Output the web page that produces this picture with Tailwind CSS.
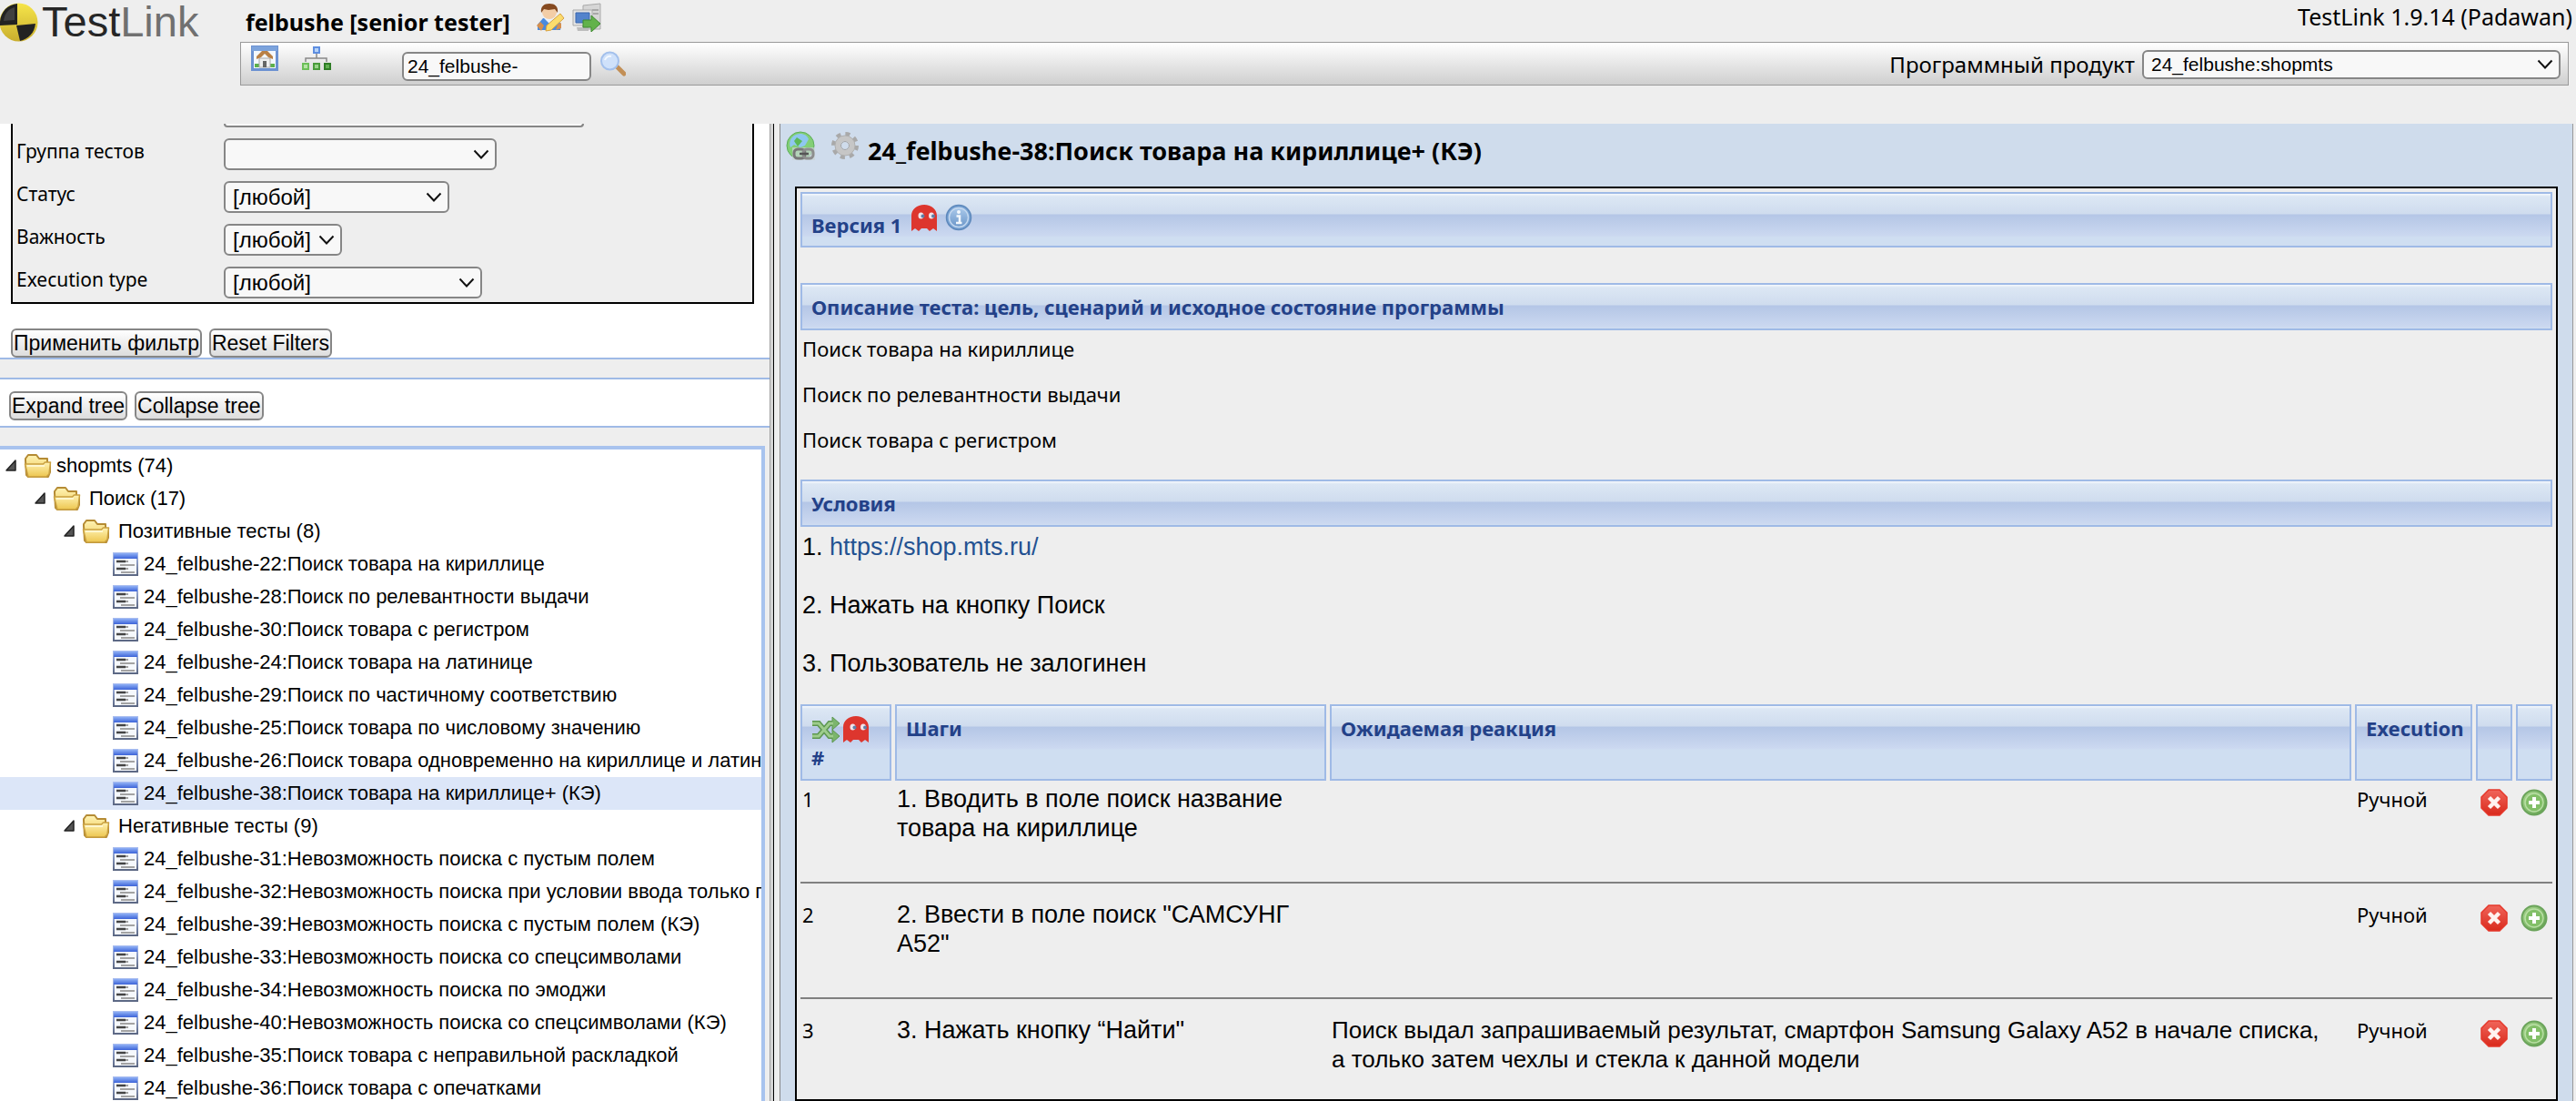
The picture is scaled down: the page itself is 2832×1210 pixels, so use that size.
<!DOCTYPE html>
<html lang="ru">
<head>
<meta charset="utf-8">
<title>TestLink 1.9.14 (Padawan)</title>
<script src="https://cdn.jsdelivr.net/npm/@tailwindcss/browser@4"></script>
</head>
<body class="flex h-screen flex-col overflow-hidden bg-[#eeeeee] font-['Noto_Sans',sans-serif] text-[22px] leading-8 text-black">

<svg class="absolute size-0" aria-hidden="true">
  <defs>
    <linearGradient id="gYellow" x1="0" y1="0" x2="0" y2="1"><stop offset="0" stop-color="#f6e54a"/><stop offset="1" stop-color="#c9ae2e"/></linearGradient>
    <linearGradient id="gFolder" x1="0" y1="0" x2="0" y2="1"><stop offset="0" stop-color="#fff3b4"/><stop offset="1" stop-color="#edc64f"/></linearGradient>
    <linearGradient id="gDocTop" x1="0" y1="0" x2="0" y2="1"><stop offset="0" stop-color="#8fb0f5"/><stop offset="1" stop-color="#3c63d8"/></linearGradient>
    <linearGradient id="gDocEdge" x1="0" y1="0" x2="0" y2="1"><stop offset="0" stop-color="#a9bdf0"/><stop offset="1" stop-color="#5c6884"/></linearGradient>
    <linearGradient id="gRed" x1="0" y1="0" x2="0" y2="1"><stop offset="0" stop-color="#f0655a"/><stop offset="1" stop-color="#d92a1c"/></linearGradient>
    <linearGradient id="gGreen" x1="0" y1="0" x2="1" y2="1"><stop offset="0" stop-color="#aad890"/><stop offset="1" stop-color="#5f9f4c"/></linearGradient>
    <linearGradient id="gBlue" x1="0" y1="0" x2="0" y2="1"><stop offset="0" stop-color="#a9c8ea"/><stop offset="1" stop-color="#6c97c9"/></linearGradient>
  </defs>
  <symbol id="chevron" viewBox="0 0 18 12"><path d="M1.500 1.500 9 9.500l7.500-8" fill="none" stroke="#111" stroke-width="2"/></symbol>
  <symbol id="arrow" viewBox="0 0 14 14"><path d="M12 1v11H2z" fill="#555" stroke="#222" stroke-width="1.500" stroke-linejoin="round"/></symbol>
  <symbol id="folder" viewBox="0 0 32 28">
    <path d="M2 8V6l3-4h9l3 4h9v5h3v10l-2 5H5l-2-2z" fill="url(#gFolder)" stroke="#b58b34" stroke-width="2" stroke-linejoin="round"/>
    <path d="M1.500 12h20l2-2h6L28 23l-3 3H5z" fill="url(#gFolder)" stroke="#c9a040" stroke-width="1.500" stroke-linejoin="round"/>
    <path d="M4 14h19" stroke="#fffbe0" stroke-width="1.500"/>
  </symbol>
  <symbol id="doc" viewBox="0 0 28 26">
    <rect x="1" y="1" width="26" height="24" fill="#f5f8fc" stroke="url(#gDocEdge)" stroke-width="2"/>
    <rect x="1" y="1" width="26" height="6" fill="url(#gDocTop)"/>
    <path d="M4 10h10M4 18h10" stroke="#444" stroke-width="2.500"/>
    <path d="M8 14h16M14 10h3M14 18h3M9 22h15" stroke="#a3a3a3" stroke-width="2"/>
  </symbol>
  <symbol id="ghost" viewBox="0 0 30 32">
    <path d="M1 30V13C1 6 7 1 15 1s14 5 14 12v17l-4-3-4 3-3-3h-6l-3 3-4-3z" fill="#dd362e"/>
    <ellipse cx="11.500" cy="13" rx="3" ry="3.500" fill="#f1e4ea"/><ellipse cx="23" cy="13" rx="3" ry="3.500" fill="#f1e4ea"/>
    <circle cx="13.500" cy="13.500" r="2" fill="#5d7fa8"/><circle cx="25" cy="13.500" r="2" fill="#5d7fa8"/>
  </symbol>
  <symbol id="info" viewBox="0 0 30 30">
    <circle cx="15" cy="15" r="13.500" fill="#79a3d3" stroke="#5d88bb" stroke-width="1.500"/>
    <circle cx="15" cy="15" r="10.500" fill="url(#gBlue)" stroke="#c4d8ef" stroke-width="1.500"/>
    <circle cx="15" cy="9" r="2" fill="#f2f7fc"/><path d="M12.500 13.500H16V20M12 21h6.500" fill="none" stroke="#f2f7fc" stroke-width="2.500"/>
  </symbol>
  <symbol id="del" viewBox="0 0 30 30">
    <path d="M9 1h12l8 8v12l-8 8H9l-8-8V9z" fill="url(#gRed)" stroke="#e5382b" stroke-width="1.500"/>
    <path d="m9.500 9.500 11 11m0-11-11 11" stroke="#fff3f0" stroke-width="4.500"/>
  </symbol>
  <symbol id="add" viewBox="0 0 30 30">
    <circle cx="15" cy="15" r="13.500" fill="url(#gGreen)" stroke="#6ba45b" stroke-width="2"/>
    <circle cx="15" cy="15" r="10" fill="#82bf68" stroke="#b9dfa5" stroke-width="1.500"/>
    <path d="M15 9v12M9 15h12" stroke="#fff" stroke-width="4"/>
  </symbol>
</svg>

<header class="flex h-34 shrink-0">
  <a href="#" class="flex w-66 shrink-0 items-start font-['Liberation_Sans',sans-serif] text-[47px] leading-12" aria-label="TestLink">
    <svg class="mr-1 h-12 w-[42px]" viewBox="0 0 42 48">
      <circle cx="20.500" cy="24.500" r="21" fill="url(#gYellow)"/>
      <path d="M19 4v23L0 28C-1 15 7 5 19 4zM18 28l21-2c-1 10-8 17-17 19z" fill="#222"/>
      <path d="M16 8v14L4 23C5 15 9 10 16 8z" fill="#777" opacity=".35"/>
    </svg>
    <span class="text-[#262626]">Test</span><span class="text-[#707070]">Link</span>
  </a>
  <div class="flex min-w-0 flex-1 flex-col pr-1">
    <div class="flex h-[46px] items-center">
      <span class="pt-0.5 pl-1.5 text-[25px] font-bold">felbushe [senior tester]</span>
      <a href="#" class="-mt-2 ml-7" aria-label="Мои настройки">
        <svg class="size-8" viewBox="0 0 32 32">
          <path d="M2 30v-6l6-7h15l5 7-1 6z" fill="#4a8ade"/><path d="m1 25 5 6 3-6-4-4zM22 30l6-2v-6l-4 2z" fill="#d58f4e"/>
          <path d="m9 17 6 6 6-6z" fill="#e8f1fb"/><circle cx="15" cy="10" r="8" fill="#f3cda6"/>
          <path d="M6 11C5 4 9 1 15 1s10 3 9 10l-3-4-7 1-5-1z" fill="#85491f"/>
          <path d="m12 25 15-13 4 5-14 13-6 1z" fill="#fbdc6d" stroke="#d9a23e"/>
        </svg>
      </a>
      <a href="#" class="-mt-2 ml-2" aria-label="Выход">
        <svg class="size-8" viewBox="0 0 32 32">
          <path d="M12 3 31 1v28H12z" fill="#d6d6d6" stroke="#a9a9a9"/><path d="M22 8h7M23 12h6" stroke="#999" stroke-width="1.500"/>
          <path d="M1 8h21v17H1z" fill="#e4e4e4" stroke="#aaa"/><path d="M4 11h15v11H4z" fill="#5383cc" stroke="#3a66ae"/>
          <path d="M5 27h13v4H6z" fill="#bcbcbc"/><path d="M12 19h9v-5l10 9-10 9v-5h-9z" fill="#62b24a" stroke="#3f8a31"/>
        </svg>
      </a>
      <span class="ml-auto self-start text-[25px] leading-9">TestLink 1.9.14 (Padawan)</span>
    </div>
    <div class="mr-1 flex h-12 items-center border border-[#999999] bg-linear-to-b from-white to-[#cfcfcf] pr-2 pl-[11px]">
      <a href="#" class="-mt-3" aria-label="Рабочий стол">
        <svg class="h-7 w-[30px]" viewBox="0 0 30 28">
          <rect x="1.500" y="1.500" width="27" height="25" fill="#f4f8fd" stroke="#6c92d2" stroke-width="3"/><path d="M1 1h28v5H1z" fill="#7ca3dc"/>
          <path d="M4 20h22v4H4z" fill="#5db04c"/><path d="M9 14h12v10H9z" fill="#eee" stroke="#aaa"/><path d="M13 17h4v7h-4z" fill="#666"/>
          <path d="M6 15v-3l6-6h6l6 6v3l-5-2-4-4-4 4z" fill="#b98046"/>
        </svg>
      </a>
      <a href="#" class="-mt-3 ml-[26px]" aria-label="Проект">
        <svg class="h-7 w-8" viewBox="0 0 32 28">
          <path d="M4 18v-4h23v4M16 9v5" fill="none" stroke="#888" stroke-width="1.500"/>
          <path d="M12 1h8v8h-8z" fill="#5e8ee0"/><path d="M14 3h4v4h-4z" fill="#b5d2f8"/>
          <path d="M0 19h8v8H0z" fill="#6cbf58"/><path d="M2 21h4v4H2z" fill="#b5e3a5"/>
          <path d="M12 19h8v8h-8z" fill="#4a9c3c"/><path d="M14 21h4v4h-4z" fill="#9ad48a"/>
          <path d="M24 19h8v8h-8z" fill="#2f7d26"/><path d="M26 21h4v4h-4z" fill="#62b052"/>
        </svg>
      </a>
      <input type="text" value="24_felbushe-" aria-label="Поиск теста" class="mt-1.5 ml-[78px] h-8 w-52 rounded-md border-2 border-[#868686] bg-[#f8f8f8] px-1 font-['Liberation_Sans',sans-serif] text-[21px] leading-7">
      <button type="button" class="ml-2.5" aria-label="Найти">
        <svg class="size-7" viewBox="0 0 28 28">
          <path d="m18 17 8 8" stroke="#c28f56" stroke-width="5" stroke-linecap="round"/>
          <circle cx="10.500" cy="11" r="9.500" fill="#cfe1fa" stroke="#a3c0ec" stroke-width="2"/><path d="M5 10c1-3 4-5 7-4" fill="none" stroke="#f4f9ff" stroke-width="2"/>
        </svg>
      </button>
      <label for="product" class="mr-2 ml-auto pt-0.5 text-2xl">Программный продукт</label>
      <div class="relative mt-0.5 w-115">
        <select id="product" class="block h-8 w-full appearance-none rounded-md border-2 border-[#868686] bg-[#f8f8f8] px-2 font-['Liberation_Sans',sans-serif] text-[21px] leading-7"><option>24_felbushe:shopmts</option></select>
        <svg class="pointer-events-none absolute top-2.5 right-2 h-3 w-[18px]"><use href="#chevron"/></svg>
      </div>
    </div>
  </div>
</header>

<div class="flex min-h-0 flex-1">
  <aside class="flex w-[846px] shrink-0 flex-col font-['Liberation_Sans',sans-serif]">
    <form class="bg-white">
      <div class="mr-[17px] ml-3 flex flex-col border-x-2 border-b-2 border-black bg-[#eeeeee] pl-1 font-['Noto_Sans',sans-serif] text-[21px]">
        <div class="mb-3 ml-57 h-1 w-[396px] rounded-b-md border-2 border-t-0 border-[#868686] bg-[#f8f8f8]"></div>
        <div class="flex h-[47px]">
          <label for="kw" class="w-57 leading-7">Группа тестов</label>
          <div class="relative w-75">
            <select id="kw" class="block h-[35px] w-full appearance-none rounded-md border-2 border-[#868686] bg-[#f8f8f8] px-2"><option></option></select>
            <svg class="pointer-events-none absolute top-3 right-2 h-3 w-[18px]"><use href="#chevron"/></svg>
          </div>
        </div>
        <div class="flex h-[47px]">
          <label for="st" class="w-57 leading-7">Статус</label>
          <div class="relative w-62">
            <select id="st" class="block h-[35px] w-full appearance-none rounded-md border-2 border-[#868686] bg-[#f8f8f8] px-2 font-['Liberation_Sans',sans-serif] text-2xl"><option>[любой]</option></select>
            <svg class="pointer-events-none absolute top-3 right-2 h-3 w-[18px]"><use href="#chevron"/></svg>
          </div>
        </div>
        <div class="flex h-[47px]">
          <label for="im" class="w-57 leading-7">Важность</label>
          <div class="relative w-[130px]">
            <select id="im" class="block h-[35px] w-full appearance-none rounded-md border-2 border-[#868686] bg-[#f8f8f8] px-2 font-['Liberation_Sans',sans-serif] text-2xl"><option>[любой]</option></select>
            <svg class="pointer-events-none absolute top-3 right-2 h-3 w-[18px]"><use href="#chevron"/></svg>
          </div>
        </div>
        <div class="flex h-[39px]">
          <label for="ex" class="w-57 leading-7">Execution type</label>
          <div class="relative w-71">
            <select id="ex" class="block h-[35px] w-full appearance-none rounded-md border-2 border-[#868686] bg-[#f8f8f8] px-2 font-['Liberation_Sans',sans-serif] text-2xl"><option>[любой]</option></select>
            <svg class="pointer-events-none absolute top-3 right-2 h-3 w-[18px]"><use href="#chevron"/></svg>
          </div>
        </div>
      </div>
      <div class="flex gap-2 pt-[27px] pl-3 text-[23px] leading-7">
        <button type="submit" class="h-8 rounded-md border-2 border-[#868686] bg-linear-to-b from-white to-[#dddddd] px-px">Применить фильтр</button>
        <button type="reset" class="h-8 rounded-md border-2 border-[#868686] bg-linear-to-b from-white to-[#dddddd] px-px">Reset Filters</button>
      </div>
    </form>
    <div class="h-6 shrink-0 border-y-2 border-[#9fbae6]"></div>
    <div class="flex h-[51px] shrink-0 gap-2 bg-white pt-[13px] pl-2.5 text-[23px] leading-7">
      <button type="button" class="h-8 rounded-md border-2 border-[#868686] bg-linear-to-b from-white to-[#dddddd] px-px">Expand tree</button>
      <button type="button" class="h-8 rounded-md border-2 border-[#868686] bg-linear-to-b from-white to-[#dddddd] px-px">Collapse tree</button>
    </div>
    <div class="h-[22px] shrink-0 border-t-2 border-[#9fbae6]"></div>
    <nav class="mr-[5px] min-h-0 flex-1 overflow-hidden border-t-4 border-r-4 border-[#a8c3ee] bg-white leading-9 whitespace-nowrap" aria-label="Дерево тестов">
      <ul>
        <li class="flex h-9 items-center pl-[5px]"><svg class="mr-[7px] size-3.5"><use href="#arrow"/></svg><svg class="mr-1 h-7 w-8"><use href="#folder"/></svg>shopmts (74)</li>
        <li class="flex h-9 items-center pl-[37px]"><svg class="mr-[7px] size-3.5"><use href="#arrow"/></svg><svg class="mr-2 h-7 w-8"><use href="#folder"/></svg>Поиск (17)</li>
        <li class="flex h-9 items-center pl-[69px]"><svg class="mr-[7px] size-3.5"><use href="#arrow"/></svg><svg class="mr-2 h-7 w-8"><use href="#folder"/></svg>Позитивные тесты (8)</li>
        <li class="flex h-9 items-center pl-31"><svg class="mr-1.5 h-[26px] w-7 shrink-0"><use href="#doc"/></svg>24_felbushe-22:Поиск товара на кириллице</li>
        <li class="flex h-9 items-center pl-31"><svg class="mr-1.5 h-[26px] w-7 shrink-0"><use href="#doc"/></svg>24_felbushe-28:Поиск по релевантности выдачи</li>
        <li class="flex h-9 items-center pl-31"><svg class="mr-1.5 h-[26px] w-7 shrink-0"><use href="#doc"/></svg>24_felbushe-30:Поиск товара с регистром</li>
        <li class="flex h-9 items-center pl-31"><svg class="mr-1.5 h-[26px] w-7 shrink-0"><use href="#doc"/></svg>24_felbushe-24:Поиск товара на латинице</li>
        <li class="flex h-9 items-center pl-31"><svg class="mr-1.5 h-[26px] w-7 shrink-0"><use href="#doc"/></svg>24_felbushe-29:Поиск по частичному соответствию</li>
        <li class="flex h-9 items-center pl-31"><svg class="mr-1.5 h-[26px] w-7 shrink-0"><use href="#doc"/></svg>24_felbushe-25:Поиск товара по числовому значению</li>
        <li class="flex h-9 items-center pl-31"><svg class="mr-1.5 h-[26px] w-7 shrink-0"><use href="#doc"/></svg>24_felbushe-26:Поиск товара одновременно на кириллице и латинице</li>
        <li class="flex h-9 items-center bg-[#dce6f8] pl-31"><svg class="mr-1.5 h-[26px] w-7 shrink-0"><use href="#doc"/></svg>24_felbushe-38:Поиск товара на кириллице+ (КЭ)</li>
        <li class="flex h-9 items-center pl-[69px]"><svg class="mr-[7px] size-3.5"><use href="#arrow"/></svg><svg class="mr-2 h-7 w-8"><use href="#folder"/></svg>Негативные тесты (9)</li>
        <li class="flex h-9 items-center pl-31"><svg class="mr-1.5 h-[26px] w-7 shrink-0"><use href="#doc"/></svg>24_felbushe-31:Невозможность поиска с пустым полем</li>
        <li class="flex h-9 items-center pl-31"><svg class="mr-1.5 h-[26px] w-7 shrink-0"><use href="#doc"/></svg>24_felbushe-32:Невозможность поиска при условии ввода только пробелов</li>
        <li class="flex h-9 items-center pl-31"><svg class="mr-1.5 h-[26px] w-7 shrink-0"><use href="#doc"/></svg>24_felbushe-39:Невозможность поиска с пустым полем (КЭ)</li>
        <li class="flex h-9 items-center pl-31"><svg class="mr-1.5 h-[26px] w-7 shrink-0"><use href="#doc"/></svg>24_felbushe-33:Невозможность поиска со спецсимволами</li>
        <li class="flex h-9 items-center pl-31"><svg class="mr-1.5 h-[26px] w-7 shrink-0"><use href="#doc"/></svg>24_felbushe-34:Невозможность поиска по эмоджи</li>
        <li class="flex h-9 items-center pl-31"><svg class="mr-1.5 h-[26px] w-7 shrink-0"><use href="#doc"/></svg>24_felbushe-40:Невозможность поиска со спецсимволами (КЭ)</li>
        <li class="flex h-9 items-center pl-31"><svg class="mr-1.5 h-[26px] w-7 shrink-0"><use href="#doc"/></svg>24_felbushe-35:Поиск товара с неправильной раскладкой</li>
        <li class="flex h-9 items-center pl-31"><svg class="mr-1.5 h-[26px] w-7 shrink-0"><use href="#doc"/></svg>24_felbushe-36:Поиск товара с опечатками</li>
      </ul>
    </nav>
  </aside>

  <div class="flex w-3 shrink-0 border-r border-[#888888]">
    <div class="w-1 border-l border-[#a0a0a0] bg-[#d4d4d4]"></div>
    <div class="w-px bg-black"></div>
  </div>

  <main class="mr-[3px] min-w-0 flex-1 border-r border-[#999999] bg-[#cfdcec] px-4">
    <h1 class="-ml-2.5 flex h-[69px] items-start text-[27px] leading-8 font-bold">
      <a href="#" class="mt-2 mr-4" aria-label="Прямая ссылка">
        <svg class="size-8" viewBox="0 0 32 32">
          <circle cx="16" cy="16" r="15" fill="#83cf76" stroke="#5cae5b"/>
          <path d="M9 5c6-4 14-2 16 4l-4 7-5 2-7-3-4 3c-2-5 0-10 4-13z" fill="#8fc7ef"/><path d="m12 7 6 4-5 6-4-6z" fill="#5cb958"/>
          <rect x="7" y="18" width="25" height="14" fill="#c9d3d6" opacity=".7"/>
          <rect x="9" y="20" width="12" height="10" rx="4" fill="none" stroke="#777" stroke-width="3"/><rect x="19" y="20" width="11" height="10" rx="4" fill="none" stroke="#8d8d8d" stroke-width="3"/><path d="M15 25h10" stroke="#555" stroke-width="2.500"/>
        </svg>
      </a>
      <button type="button" class="mt-2 mr-2" aria-label="Действия">
        <svg class="h-8 w-[34px]" viewBox="0 0 32 32">
          <circle cx="16" cy="16" r="12.500" fill="none" stroke="#a9a9a9" stroke-width="5" stroke-dasharray="4.900 4.917"/>
          <circle cx="16" cy="16" r="8" fill="none" stroke="#c6c6c6" stroke-width="6"/><circle cx="16" cy="16" r="11" fill="none" stroke="#b0b0b0"/><circle cx="16" cy="16" r="4.500" fill="#cfdcec" stroke="#a4a4a4"/>
        </svg>
      </button>
      <span class="mt-3.5">24_felbushe-38:Поиск товара на кириллице+ (КЭ)</span>
    </h1>

    <div class="h-[1005px] border-2 border-black bg-[#eeeeee]">
      <div class="px-1 pt-1">
        <div class="flex h-[61px] items-center border-2 border-[#9fbae6] bg-linear-[180deg,#f6f9fd_0px,#dce7f4_3px,#cfdcee_22px,#b4c6e6_23px,#cbd8f0_46px,#cfdef1_48px] pl-2.5 font-bold text-[#234188]">
          <h2 class="mt-2.5">Версия 1</h2>
          <button type="button" class="-mt-1 ml-2.5" aria-label="Фантом"><svg class="h-8 w-[30px]"><use href="#ghost"/></svg></button>
          <button type="button" class="-mt-1.5 ml-2" aria-label="Сведения"><svg class="size-[30px]"><use href="#info"/></svg></button>
        </div>
        <h2 class="mt-[39px] h-[52px] border-2 border-[#9fbae6] bg-linear-[180deg,#f6f9fd_0px,#dce7f4_3px,#cfdcee_22px,#b4c6e6_23px,#cbd8f0_46px,#cfdef1_48px] pt-2 pl-2.5 font-bold text-[#234188]">Описание теста: цель, сценарий и исходное состояние программы</h2>
        <div class="pt-1 pl-0.5">
          <p class="mb-[18px]">Поиск товара на кириллице</p>
          <p class="mb-[18px]">Поиск по релевантности выдачи</p>
          <p class="mb-7">Поиск товара с регистром</p>
        </div>
        <h2 class="h-[52px] border-2 border-[#9fbae6] bg-linear-[180deg,#f6f9fd_0px,#dce7f4_3px,#cfdcee_22px,#b4c6e6_23px,#cbd8f0_46px,#cfdef1_48px] pt-2 pl-2.5 font-bold text-[#234188]">Условия</h2>
        <div class="flex flex-col gap-8 pt-1.5 pb-[29px] pl-0.5 font-['Liberation_Sans',sans-serif] text-[27px]">
          <p>1. <a href="https://shop.mts.ru/" class="text-[#235292]">https://shop.mts.ru/</a></p>
          <p>2. Нажать на кнопку Поиск</p>
          <p>3. Пользователь не залогинен</p>
        </div>
      </div>

      <table class="w-full table-fixed border-separate border-spacing-x-1 border-spacing-y-0 text-left">
        <colgroup><col class="w-25"><col class="w-[474px]"><col><col class="w-[129px]"><col class="w-10"><col class="w-10"></colgroup>
        <thead class="text-[#234188]">
          <tr class="h-21 align-top">
            <th scope="col" class="border-2 border-[#9fbae6] bg-linear-[180deg,#f6f9fd_0px,#dce7f4_3px,#cfdcee_22px,#b4c6e6_23px,#cbd8f0_46px,#cfdef1_48px] px-2.5 pt-2.5">
              <span class="flex"><svg class="mr-0.5 h-8 w-8" viewBox="0 0 32 32"><path d="M1 9h7l12 14h4M1 23h7L20 9h4" fill="none" stroke="#5c9650" stroke-width="6"/><path d="M23 2l8 7-8 7zM23 16l8 7-8 7z" fill="#7bb56c" stroke="#5c9650"/><path d="M1 9h7l12 14h4M1 23h7L20 9h4" fill="none" stroke="#9dcc8c" stroke-width="3"/></svg><svg class="h-8 w-[30px]"><use href="#ghost"/></svg></span>
              <span class="block leading-7">#</span>
            </th>
            <th scope="col" class="border-2 border-[#9fbae6] bg-linear-[180deg,#f6f9fd_0px,#dce7f4_3px,#cfdcee_22px,#b4c6e6_23px,#cbd8f0_46px,#cfdef1_48px] px-2.5 pt-2">Шаги</th>
            <th scope="col" class="border-2 border-[#9fbae6] bg-linear-[180deg,#f6f9fd_0px,#dce7f4_3px,#cfdcee_22px,#b4c6e6_23px,#cbd8f0_46px,#cfdef1_48px] px-2.5 pt-2">Ожидаемая реакция</th>
            <th scope="col" class="border-2 border-[#9fbae6] bg-linear-[180deg,#f6f9fd_0px,#dce7f4_3px,#cfdcee_22px,#b4c6e6_23px,#cbd8f0_46px,#cfdef1_48px] pt-2 pl-2.5">Execution</th>
            <th class="border-2 border-[#9fbae6] bg-linear-[180deg,#f6f9fd_0px,#dce7f4_3px,#cfdcee_22px,#b4c6e6_23px,#cbd8f0_46px,#cfdef1_48px]"></th>
            <th class="border-2 border-[#9fbae6] bg-linear-[180deg,#f6f9fd_0px,#dce7f4_3px,#cfdcee_22px,#b4c6e6_23px,#cbd8f0_46px,#cfdef1_48px]"></th>
          </tr>
        </thead>
        <tbody class="align-top">
          <tr class="h-[111px]">
            <td class="px-0.5 pt-1">1</td>
            <td class="px-0.5 pt-1 font-['Liberation_Sans',sans-serif] text-[27px]">1. Вводить в поле поиск название<br>товара на кириллице</td>
            <td></td>
            <td class="px-0.5 pt-1">Ручной</td>
            <td class="pt-[9px] pl-[5px]"><button type="button" class="block" aria-label="Удалить шаг 1"><svg class="size-[30px]"><use href="#del"/></svg></button></td>
            <td class="pt-[9px] pl-[5px]"><button type="button" class="block" aria-label="Вставить шаг после 1"><svg class="size-[30px]"><use href="#add"/></svg></button></td>
          </tr>
          <tr><td colspan="6" class="pb-3.5"><hr class="border-t-2 border-[#808080]"></td></tr>
          <tr class="h-[111px]">
            <td class="px-0.5 pt-1">2</td>
            <td class="px-0.5 pt-1 font-['Liberation_Sans',sans-serif] text-[27px]">2. Ввести в поле поиск "САМСУНГ<br>А52"</td>
            <td></td>
            <td class="px-0.5 pt-1">Ручной</td>
            <td class="pt-[9px] pl-[5px]"><button type="button" class="block" aria-label="Удалить шаг 2"><svg class="size-[30px]"><use href="#del"/></svg></button></td>
            <td class="pt-[9px] pl-[5px]"><button type="button" class="block" aria-label="Вставить шаг после 2"><svg class="size-[30px]"><use href="#add"/></svg></button></td>
          </tr>
          <tr><td colspan="6" class="pb-3.5"><hr class="border-t-2 border-[#808080]"></td></tr>
          <tr>
            <td class="px-0.5 pt-1">3</td>
            <td class="px-0.5 pt-1 font-['Liberation_Sans',sans-serif] text-[27px]">3. Нажать кнопку “Найти"</td>
            <td class="px-0.5 pt-1 font-['Liberation_Sans',sans-serif] text-[26px]">Поиск выдал запрашиваемый результат, смартфон Samsung Galaxy A52 в начале списка,<br>а только затем чехлы и стекла к данной модели</td>
            <td class="px-0.5 pt-1">Ручной</td>
            <td class="pt-[9px] pl-[5px]"><button type="button" class="block" aria-label="Удалить шаг 3"><svg class="size-[30px]"><use href="#del"/></svg></button></td>
            <td class="pt-[9px] pl-[5px]"><button type="button" class="block" aria-label="Вставить шаг после 3"><svg class="size-[30px]"><use href="#add"/></svg></button></td>
          </tr>
        </tbody>
      </table>
    </div>
  </main>
</div>
</body>
</html>
